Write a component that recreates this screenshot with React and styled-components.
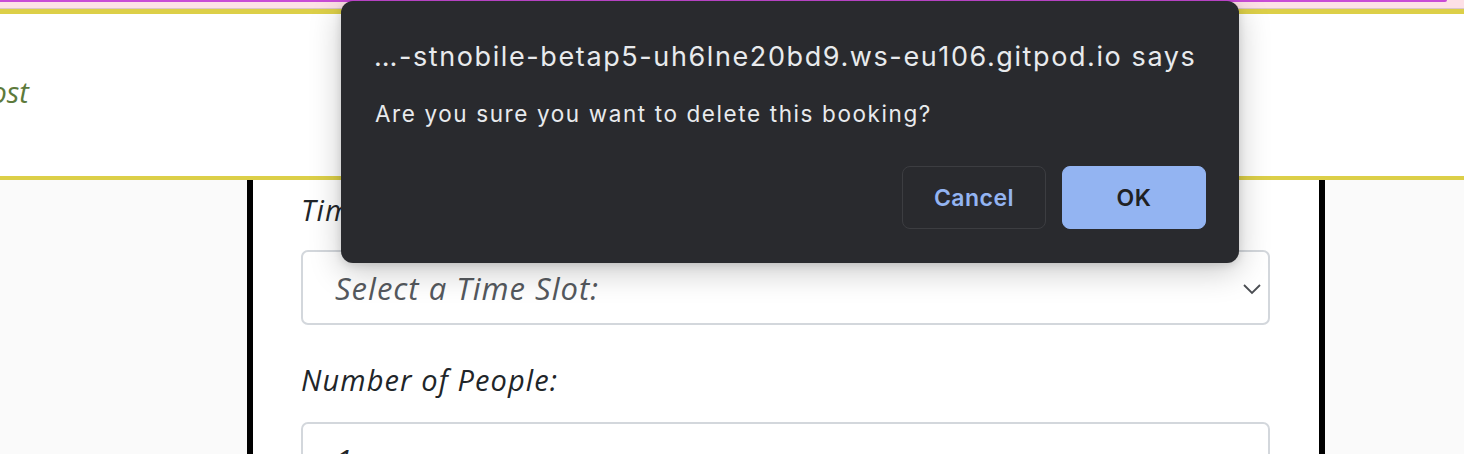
import React from "react";
import styled, { createGlobalStyle } from "styled-components";

const Global = createGlobalStyle`
  html, body { margin: 0; padding: 0; background: #fafafa; overflow: hidden; }
  body { font-family: "Open Sans", "Noto Sans", sans-serif; }
  * { box-sizing: border-box; }
`;

const Page = styled.div`
  position: relative;
  width: 1464px;
  height: 454px;
  overflow: hidden;
  background: #fafafa;
`;

const TabStrip = styled.div`
  height: 14px;
  background: #fde0e6;
  border-bottom: 5px solid #dccf48;
  position: relative;
`;

const TabLine = styled.div`
  height: 2px;
  width: calc(100% - 17px);
  background: #c94ad6;
  border-bottom-right-radius: 3px;
`;

const TabSeam = styled.div`
  position: absolute;
  left: 0;
  right: 0;
  bottom: 0;
  height: 1px;
  background: #d8c6cc;
`;

const Header = styled.header`
  height: 166px;
  background: #ffffff;
  border-bottom: 4px solid #dccf48;
  display: flex;
  align-items: center;
  overflow: hidden;
`;

const Logo = styled.div`
  font-family: "Open Sans", "Noto Sans", sans-serif;
  font-style: italic;
  font-size: 29px;
  color: #5d7a3b;
  margin-left: -26px;
  margin-top: -8px;
`;

const Main = styled.main`
  display: flex;
  justify-content: flex-start;
  padding-left: 247px;
`;

const Panel = styled.section`
  width: 1078px;
  height: 300px;
  background: #ffffff;
  border-left: 6px solid #000;
  border-right: 6px solid #000;
  padding: 12px 49px 0 48px;
  display: flex;
  flex-direction: column;
`;

const Label = styled.label`
  font-family: "Open Sans", "Noto Sans", sans-serif;
  font-style: italic;
  font-size: 29px;
  letter-spacing: 1.1px;
  line-height: 36px;
  color: #212529;
  margin-bottom: ${(p) => p.$gap}px;
`;

const Field = styled.div`
  position: relative;
  flex: none;
  height: 75px;
  border: 2px solid #d3d7dc;
  border-radius: 7px;
  background: #fff;
  display: flex;
  align-items: center;
  padding-left: 32px;
  margin-bottom: ${(p) => p.$gap}px;
  font-family: "Open Sans", "Noto Sans", sans-serif;
  font-style: italic;
  font-size: 31px;
  letter-spacing: 1px;
  color: ${(p) => (p.$muted ? "#55595e" : "#212529")};
`;

const Chevron = styled.svg`
  position: absolute;
  right: 6px;
  top: 31px;
`;

const Dialog = styled.div`
  position: absolute;
  left: 341px;
  top: 1px;
  width: 898px;
  height: 262px;
  background: #292a2e;
  border-radius: 12px;
  box-shadow: 0 8px 32px rgba(0, 0, 0, 0.22), 0 2px 8px rgba(0, 0, 0, 0.12);
  padding: 40px 33px 0 33px;
  font-family: Inter, Roboto, sans-serif;
  display: flex;
  flex-direction: column;
`;

const DialogTitle = styled.div`
  font-size: 27px;
  letter-spacing: 1.6px;
  line-height: 32px;
  color: #e8eaed;
  margin-bottom: 26px;
  white-space: nowrap;
`;

const DialogMessage = styled.div`
  font-size: 22.5px;
  letter-spacing: 1.6px;
  line-height: 30px;
  color: #e8eaed;
  padding-left: 1px;
  white-space: nowrap;
`;

const Buttons = styled.div`
  display: flex;
  justify-content: flex-end;
  gap: 16px;
  margin-top: 37px;
`;

const Button = styled.button`
  width: 144px;
  height: 63px;
  border-radius: 8px;
  font-family: Inter, Roboto, sans-serif;
  font-size: 23px;
  font-weight: 600;
  letter-spacing: 0.5px;
  border: 1px solid ${(p) => (p.$primary ? "#93b4f2" : "#3c3d41")};
  background: ${(p) => (p.$primary ? "#93b4f2" : "transparent")};
  color: ${(p) => (p.$primary ? "#202124" : "#93b4f2")};
  cursor: pointer;
`;

export default function App() {
  return (
    <Page>
      <Global />
      <TabStrip>
        <TabLine />
        <TabSeam />
      </TabStrip>
      <Header>
        <Logo>Post</Logo>
      </Header>
      <Main>
        <Panel>
          <Label $gap={22}>Time Slot:</Label>
          <Field $muted $gap={37}>
            Select a Time Slot:
            <Chevron width="20" height="12" viewBox="0 0 20 12">
              <path d="M2 2 L10 10 L18 2" fill="none" stroke="#4a4d52" strokeWidth="1.8" />
            </Chevron>
          </Field>
          <Label $gap={24}>Number of People:</Label>
          <Field $gap={0}>1</Field>
        </Panel>
      </Main>
      <Dialog role="alertdialog">
        <DialogTitle>…-stnobile-betap5-uh6lne20bd9.ws-eu106.gitpod.io says</DialogTitle>
        <DialogMessage>Are you sure you want to delete this booking?</DialogMessage>
        <Buttons>
          <Button>Cancel</Button>
          <Button $primary>OK</Button>
        </Buttons>
      </Dialog>
    </Page>
  );
}
